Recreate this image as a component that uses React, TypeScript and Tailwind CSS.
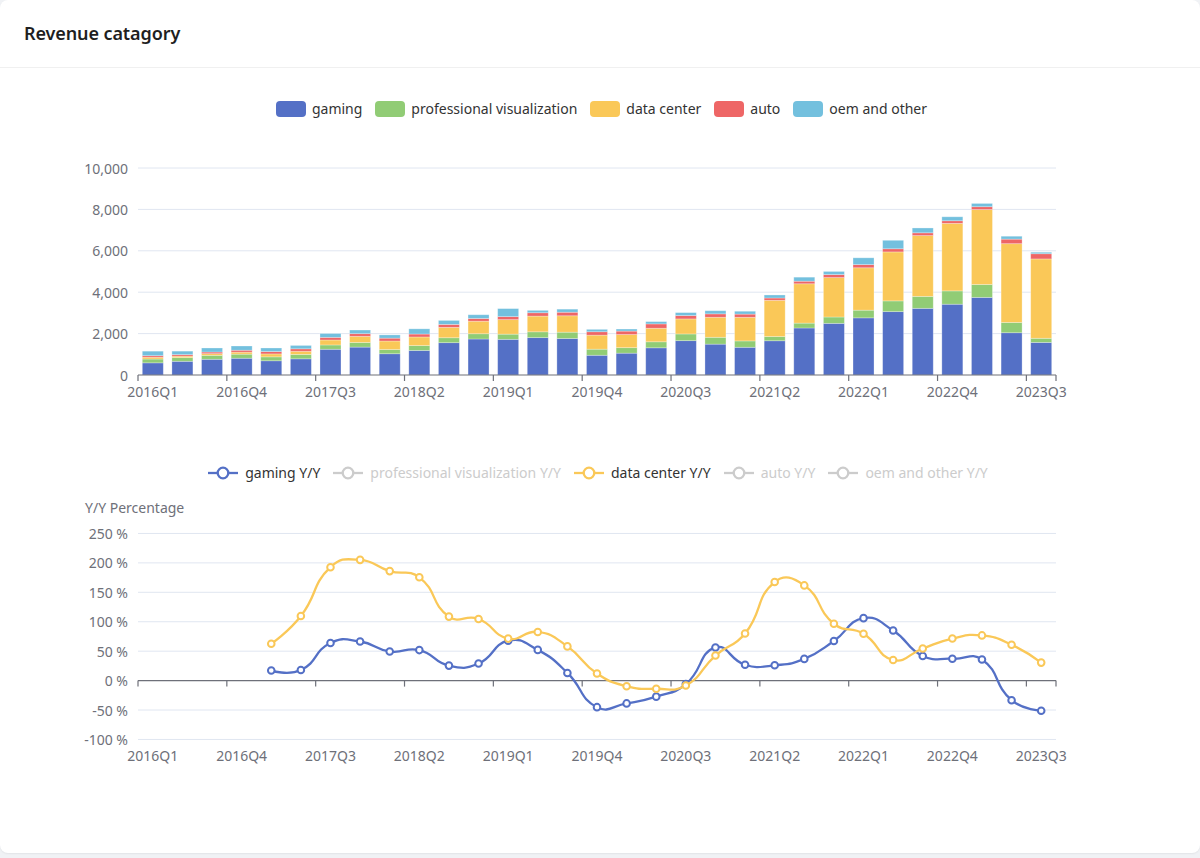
import React from "react"

const gaming = [587, 662, 759, 810, 687, 781, 1244, 1348, 1027, 1186, 1561, 1739, 1723, 1805, 1764, 954, 1055, 1313, 1659, 1491, 1339, 1654, 2271, 2495, 2760, 3061, 3221, 3420, 3750, 2042, 1574]
const proViz = [184, 179, 190, 197, 189, 214, 207, 225, 205, 235, 239, 254, 251, 281, 305, 293, 266, 291, 324, 331, 307, 203, 236, 307, 372, 519, 577, 643, 622, 496, 200]
const dataCenter = [88, 72, 82, 97, 143, 151, 240, 296, 409, 416, 501, 606, 701, 760, 792, 679, 634, 655, 726, 968, 1141, 1752, 1900, 1903, 2048, 2366, 2936, 3263, 3620, 3806, 3833]
const auto = [74, 71, 79, 93, 113, 119, 127, 128, 140, 142, 144, 132, 145, 161, 172, 163, 166, 209, 162, 163, 155, 111, 125, 145, 154, 152, 135, 125, 138, 220, 251]
const oem = [218, 169, 195, 204, 173, 163, 186, 176, 156, 251, 191, 180, 387, 116, 148, 116, 99, 111, 143, 152, 138, 146, 194, 153, 327, 409, 234, 192, 158, 140, 73]

const series = [
  { name: "gaming", color: "#5470c6", data: gaming },
  { name: "professional visualization", color: "#91cc75", data: proViz },
  { name: "data center", color: "#fac858", data: dataCenter },
  { name: "auto", color: "#ee6666", data: auto },
  { name: "oem and other", color: "#73c0de", data: oem },
]

const lineLegend = [
  { name: "gaming Y/Y", color: "#5470c6", on: true },
  { name: "professional visualization Y/Y", color: "#cccccc", on: false },
  { name: "data center Y/Y", color: "#fac858", on: true },
  { name: "auto Y/Y", color: "#cccccc", on: false },
  { name: "oem and other Y/Y", color: "#cccccc", on: false },
]

const quarters: string[] = []
for (let y = 2016; y <= 2023; y++) {
  for (let q = 1; q <= 4; q++) {
    if (quarters.length < 31) quarters.push(`${y}Q${q}`)
  }
}

const X0 = 138
const X1 = 1056
const N = quarters.length
const BAND = (X1 - X0) / N
const cx = (i: number) => X0 + (i + 0.5) * BAND
const labelIdx = quarters.map((_, i) => i).filter((i) => i % 3 === 0)
const tickIdx = [...labelIdx, N]

// top chart, svg origin at page y=150
const yTop = (v: number) => 225 - (v * 207) / 10000
// bottom chart, svg origin at page y=495
const yBot = (p: number) => 185.6 - p * 0.5886

const yoy = (arr: number[]) =>
  arr.map((v, i) => (i < 4 ? null : ((v - arr[i - 4]) / arr[i - 4]) * 100))

function smoothPath(pts: [number, number][], smooth = 0.5) {
  const outCp: [number, number][] = []
  const inCp: [number, number][] = []
  pts.forEach((p, i) => {
    if (i === 0 || i === pts.length - 1) {
      outCp.push(p)
      inCp.push(p)
      return
    }
    const prev = pts[i - 1]
    const next = pts[i + 1]
    const vx = next[0] - prev[0]
    const vy = next[1] - prev[1]
    const l0 = Math.hypot(p[0] - prev[0], p[1] - prev[1])
    const l1 = Math.hypot(next[0] - p[0], next[1] - p[1])
    const r = l1 / (l0 + l1)
    outCp.push([p[0] + vx * smooth * r, p[1] + vy * smooth * r])
    inCp.push([p[0] - vx * smooth * (1 - r), p[1] - vy * smooth * (1 - r)])
  })
  let d = `M${pts[0][0]},${pts[0][1]}`
  for (let i = 0; i < pts.length - 1; i++) {
    const a = outCp[i]
    const b = inCp[i + 1]
    const n = pts[i + 1]
    d += ` C${a[0]},${a[1]} ${b[0]},${b[1]} ${n[0]},${n[1]}`
  }
  return d
}

function BarChart() {
  return (
    <svg width={1200} height={260} className="block">
      {[2000, 4000, 6000, 8000, 10000].map((v) => (
        <line key={v} x1={X0} x2={X1} y1={yTop(v)} y2={yTop(v)} stroke="#e0e6f1" />
      ))}
      {[0, 2000, 4000, 6000, 8000, 10000].map((v) => (
        <text key={v} x={128} y={yTop(v)} textAnchor="end" dominantBaseline="central" fontSize={14} fill="#6e7079">
          {v.toLocaleString("en-US")}
        </text>
      ))}
      {quarters.map((_, i) => {
        let acc = 0
        return (
          <g key={i}>
            {series.map((s) => {
              const v = s.data[i]
              const top = yTop(acc + v)
              const bottom = yTop(acc)
              acc += v
              return (
                <rect
                  key={s.name}
                  x={cx(i) - 10.5}
                  y={top}
                  width={21}
                  height={bottom - top}
                  fill={s.color}
                  stroke="#ffffff"
                  strokeOpacity={0.35}
                  strokeWidth={0.8}
                />
              )
            })}
          </g>
        )
      })}
      <line x1={X0} x2={X1} y1={225} y2={225} stroke="#6e7079" strokeWidth={1.2} />
      {tickIdx.map((i) => (
        <line key={i} x1={X0 + i * BAND} x2={X0 + i * BAND} y1={225} y2={231} stroke="#6e7079" strokeWidth={1.2} />
      ))}
      {labelIdx.map((i) => (
        <text key={i} x={cx(i)} y={241} textAnchor="middle" dominantBaseline="central" fontSize={14} fill="#6e7079">
          {quarters[i]}
        </text>
      ))}
    </svg>
  )
}

function LineChart() {
  const lines = [
    { color: "#5470c6", data: yoy(gaming) },
    { color: "#fac858", data: yoy(dataCenter) },
  ]
  const ticks = [250, 200, 150, 100, 50, 0, -50, -100]
  return (
    <svg width={1200} height={280} className="block">
      <text x={85} y={12} dominantBaseline="central" fontSize={14} fill="#6e7079">
        Y/Y Percentage
      </text>
      {ticks.filter((t) => t !== 0).map((t) => (
        <line key={t} x1={X0} x2={X1} y1={yBot(t)} y2={yBot(t)} stroke="#e0e6f1" />
      ))}
      {ticks.map((t) => (
        <text key={t} x={128} y={yBot(t)} textAnchor="end" dominantBaseline="central" fontSize={14} fill="#6e7079">
          {t} %
        </text>
      ))}
      <line x1={X0} x2={X1} y1={yBot(0)} y2={yBot(0)} stroke="#6e7079" strokeWidth={1.2} />
      {tickIdx.map((i) => (
        <line key={i} x1={X0 + i * BAND} x2={X0 + i * BAND} y1={yBot(0)} y2={yBot(0) + 6} stroke="#6e7079" strokeWidth={1.2} />
      ))}
      {labelIdx.map((i) => (
        <text key={i} x={cx(i)} y={260} textAnchor="middle" dominantBaseline="central" fontSize={14} fill="#6e7079">
          {quarters[i]}
        </text>
      ))}
      {lines.map((l) => {
        const pts = l.data
          .map((v, i) => (v === null ? null : ([cx(i), yBot(v)] as [number, number])))
          .filter((p): p is [number, number] => p !== null)
        return (
          <g key={l.color}>
            <path d={smoothPath(pts)} fill="none" stroke={l.color} strokeWidth={2.3} strokeLinejoin="round" />
            {pts.map((p, i) => (
              <circle key={i} cx={p[0]} cy={p[1]} r={3.3} fill="#ffffff" stroke={l.color} strokeWidth={2} />
            ))}
          </g>
        )
      })}
    </svg>
  )
}

export default function App() {
  return (
    <div className="min-h-screen bg-[#f0f2f5] font-['Noto_Sans',sans-serif]">
      <div className="h-[853px] bg-white rounded-lg shadow-[0_1px_2px_rgba(0,0,0,0.06)] overflow-hidden">
        {/* Header */}
        <div className="h-[68px] border-b border-[#f0f0f0] px-6 flex items-center">
          <h2 className="text-[18px] font-semibold text-[#1f1f1f] tracking-[-0.1px]">Revenue catagory</h2>
        </div>

        {/* Bar legend */}
        <div className="mt-[33px] h-4 flex items-center justify-center gap-[13px] pl-[3px]">
          {series.map((s) => (
            <div key={s.name} className="flex items-center gap-[6px]">
              <span className="w-[30px] h-4 rounded-[4px]" style={{ background: s.color }} />
              <span className="text-[14px] leading-4 text-[#333]">{s.name}</span>
            </div>
          ))}
        </div>

        <div className="mt-[33px]">
          <BarChart />
        </div>

        {/* Line legend */}
        <div className="mt-[55px] h-4 flex items-center justify-center gap-[13px] pr-[4px]">
          {lineLegend.map((l) => (
            <div key={l.name} className="flex items-center gap-[7px]">
              <svg width={30} height={16} className="block">
                <line x1={0} x2={30} y1={8} y2={8} stroke={l.color} strokeWidth={2.3} />
                <circle cx={15} cy={8} r={5.3} fill="#ffffff" stroke={l.color} strokeWidth={2.3} />
              </svg>
              <span className={l.on ? "text-[14px] leading-4 text-[#333]" : "text-[14px] leading-4 text-[#ccc]"}>{l.name}</span>
            </div>
          ))}
        </div>

        <div className="mt-[14px]">
          <LineChart />
        </div>
      </div>
    </div>
  )
}
